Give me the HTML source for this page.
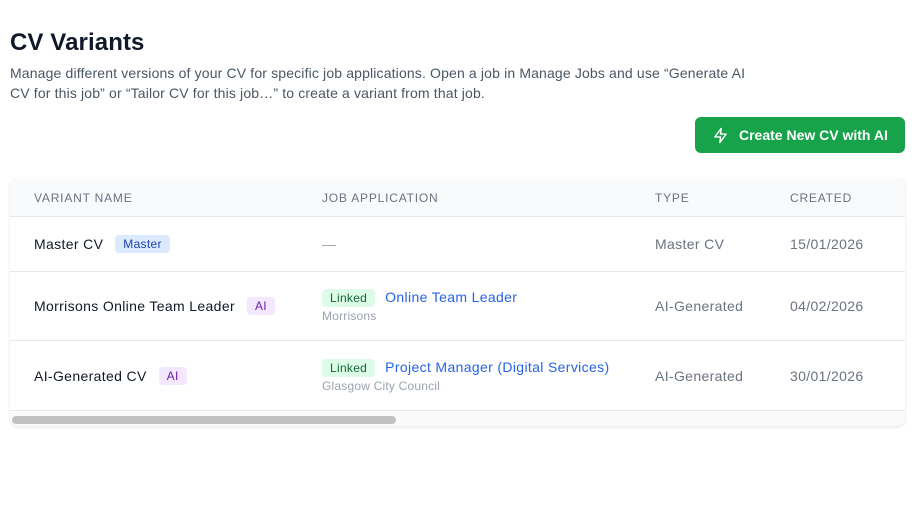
<!DOCTYPE html>
<html><head><style>
*{box-sizing:border-box;margin:0;padding:0}
body{width:920px;height:520px;background:#fff;font-family:"Liberation Sans",sans-serif;color:#111827;position:relative;overflow:hidden}
h1{position:absolute;left:10px;top:29px;font-size:24px;font-weight:700;color:#111827;letter-spacing:.1px}
.desc{position:absolute;left:10px;top:63px;width:745px;font-size:14px;line-height:20px;color:#4b5563;letter-spacing:.15px}
.btn{position:absolute;left:695px;top:117px;width:210px;height:36px;background:#16a34a;border-radius:6px;color:#fff;font-size:14px;font-weight:700;display:flex;align-items:center;padding-left:17px}
.btn svg{margin-right:10px}
.tbl{position:absolute;left:10px;top:178px;width:895px;height:248px;border-radius:8px;box-shadow:0 1px 3px rgba(0,0,0,.12);overflow:hidden;background:#fff}
.hdr{height:39px;background:#f9fafb;border-bottom:1px solid #e5e7eb;position:relative;font-size:12px;letter-spacing:.8px;color:#6b7280}
.hdr span,.row span.c{position:absolute}
.row{position:relative;border-bottom:1px solid #e5e7eb;font-size:14px;letter-spacing:.35px}
.c{top:50%;transform:translateY(-50%)}
.badge{display:inline-block;font-size:12px;padding:2px 8px;border-radius:4px;margin-left:12px;vertical-align:1px;letter-spacing:.3px}
.gray{color:#6b7280}
.link{color:#2563eb}
.lk{display:inline-block;background:#dcfce7;color:#166534;font-size:12px;padding:2px 8px;border-radius:4px;margin-right:10px;letter-spacing:.3px}
.sub{font-size:12px;color:#9ca3af;margin-top:2px;letter-spacing:.2px}
.sb{position:absolute;left:0;top:234px;width:895px;height:14px;background:#fafafa}
.sb div{position:absolute;left:2px;top:4px;width:384px;height:8px;border-radius:4px;background:#c1c1c1}
</style></head><body>
<h1>CV Variants</h1>
<div class="desc">Manage different versions of your CV for specific job applications. Open a job in Manage Jobs and use “Generate AI CV for this job” or “Tailor CV for this job…” to create a variant from that job.</div>
<div class="btn"><svg width="17" height="17" viewBox="0 0 24 24" fill="none" stroke="#fff" stroke-width="2" stroke-linejoin="round"><path d="M13 2L4 14h8l-1 8 9-12h-8l1-8z"/></svg>Create New CV with AI</div>
<div class="tbl">
<div class="hdr"><span style="left:24px;top:13px">VARIANT NAME</span><span style="left:312px;top:13px">JOB APPLICATION</span><span style="left:645px;top:13px">TYPE</span><span style="left:780px;top:13px">CREATED</span></div>
<div class="row" style="height:55px"><span class="c" style="left:24px">Master CV<span class="badge" style="background:#dbeafe;color:#1e40af">Master</span></span><span class="c gray" style="left:312px;color:#9ca3af">—</span><span class="c gray" style="left:645px">Master CV</span><span class="c gray" style="left:780px">15/01/2026</span></div>
<div class="row" style="height:69px"><span class="c" style="left:24px">Morrisons Online Team Leader<span class="badge" style="background:#f3e8ff;color:#6b21a8">AI</span></span><span class="c" style="left:312px"><span class="lk">Linked</span><span class="link">Online Team Leader</span><div class="sub">Morrisons</div></span><span class="c gray" style="left:645px">AI-Generated</span><span class="c gray" style="left:780px">04/02/2026</span></div>
<div class="row" style="height:70px"><span class="c" style="left:24px">AI-Generated CV<span class="badge" style="background:#f3e8ff;color:#6b21a8">AI</span></span><span class="c" style="left:312px"><span class="lk">Linked</span><span class="link">Project Manager (Digital Services)</span><div class="sub">Glasgow City Council</div></span><span class="c gray" style="left:645px">AI-Generated</span><span class="c gray" style="left:780px">30/01/2026</span></div>
<div class="sb"><div></div></div>
</div>
</body></html>
